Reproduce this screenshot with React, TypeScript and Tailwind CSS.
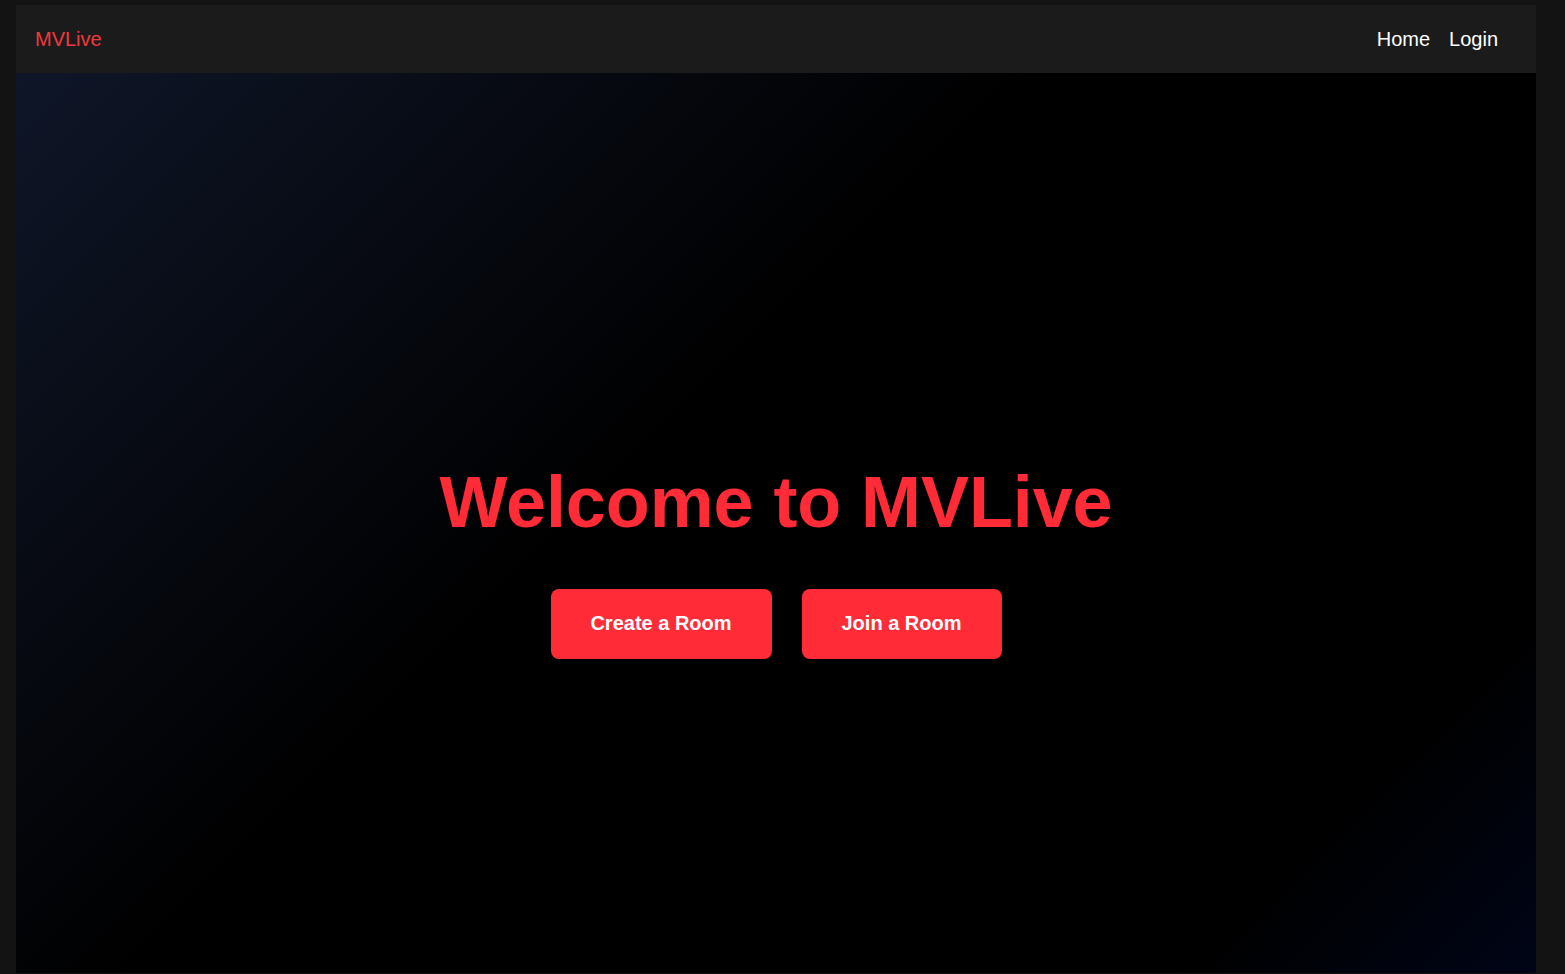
import React from "react";

export default function App() {
  return (
    <div
      className="w-full h-screen bg-[#131313] pt-[5px] pl-[16px] pr-[29px] pb-[1px] overflow-hidden"
      style={{ fontFamily: '"Liberation Sans", Arial, sans-serif' }}
    >
      <div className="flex flex-col h-full">
        <nav className="h-[68px] shrink-0 bg-[#1b1b1b] flex items-center justify-between pl-[19px] pr-[38px]">
          <span className="text-[20px] text-[#f2383c]">MVLive</span>
          <div className="flex items-center gap-[19px] text-[20px] text-white">
            <span>Home</span>
            <span>Login</span>
          </div>
        </nav>
        <main className="flex-1 bg-[linear-gradient(135deg,#0f1628_0%,#000_42%,#000_85%,#000517_100%)] flex flex-col items-center justify-center pt-[74px]">
          <h1 className="text-[72px] leading-[80px] font-bold tracking-[-0.1px] text-[#ff2b37] mb-[47px]">
            Welcome to MVLive
          </h1>
          <div className="flex gap-[30px]">
            <button className="h-[70px] w-[221px] rounded-[8px] bg-[#ff2b37] text-white text-[20px] font-bold leading-[23px]">
              Create a Room
            </button>
            <button className="h-[70px] w-[200px] rounded-[8px] bg-[#ff2b37] text-white text-[20px] font-bold leading-[23px]">
              Join a Room
            </button>
          </div>
        </main>
      </div>
    </div>
  );
}
